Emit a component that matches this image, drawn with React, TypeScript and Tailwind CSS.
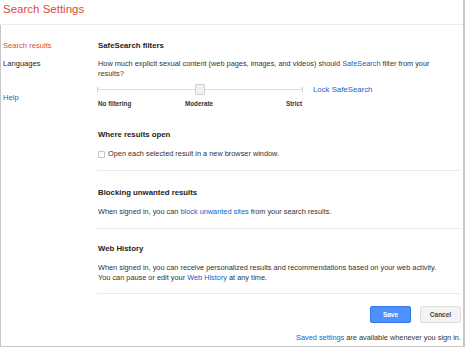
import React from "react";

const font = { fontFamily: '"Liberation Sans", Arial, sans-serif' };

function Separator() {
  return <div className="h-px bg-[#ebebeb] w-full" />;
}

export default function App() {
  return (
    <div
      className="w-[465px] h-[347px] bg-white flex flex-col border-r-2 border-b border-[#c6c6c6] overflow-hidden text-[#333]"
      style={font}
    >
      {/* header */}
      <div className="h-[25px] shrink-0 border-b border-[#ebebeb] pl-[3px] pt-[2px]">
        <div className="text-[#dd4b39] text-[11.5px] leading-[14px]">Search Settings</div>
      </div>

      <div className="flex-1 flex border-l border-[#c6c6c6]">
        {/* left nav */}
        <div className="w-[96px] shrink-0 pl-[2px] flex flex-col text-[7.6px] leading-[10px]">
          <div className="mt-[16px] text-[#dd4b39]">Search results</div>
          <div className="mt-[8px] text-[#222]">Languages</div>
          <div className="mt-[24px] text-[#1a5ccc]">Help</div>
        </div>

        {/* main */}
        <div className="flex-1 flex flex-col pr-[2px] text-[7.35px] leading-[10px]">
          <div className="mt-[16px] font-bold text-[#222] text-[7.8px] pl-[1px]">SafeSearch filters</div>
          <div className="mt-[8px] pl-[1px] pr-[20px]">
            How much explicit sexual content (web pages, images, and videos) should{" "}
            <span className="text-[#1a5ccc]">SafeSearch</span> filter from your results?
          </div>

          {/* slider */}
          <div className="mt-[5px] h-[11px] flex items-center">
            <div className="relative w-[206px] h-[11px]">
              <div className="absolute left-0 right-0 top-[5px] h-px bg-[#dcdcdc]" />
              <div className="absolute left-0 top-[3px] w-px h-[5px] bg-[#cfcfcf]" />
              <div className="absolute right-0 top-[3px] w-px h-[5px] bg-[#cfcfcf]" />
              <div className="absolute left-[98px] top-0 w-[10px] h-[11px] bg-[#f1f1f1] border border-[#d0d0d0] rounded-[1px]" />
            </div>
            <div className="ml-[10px] text-[#1a5ccc] text-[7.8px]">Lock SafeSearch</div>
          </div>
          <div className="mt-[4px] relative h-[10px] text-[6.3px] font-bold text-[#333]">
            <span className="absolute left-[1px] top-0">No filtering</span>
            <span className="absolute left-[88px] top-0">Moderate</span>
            <span className="absolute left-[189px] top-0">Strict</span>
          </div>

          <div className="mt-[21px] font-bold text-[#222] text-[7.8px] pl-[1px]">Where results open</div>
          <div className="mt-[9px] flex items-center pl-[1px]">
            <div className="w-[7px] h-[7px] border border-[#c6c6c6] rounded-[1px] bg-white" />
            <span className="ml-[3px]">Open each selected result in a new browser window.</span>
          </div>
          <div className="mt-[11px]">
            <Separator />
          </div>

          <div className="mt-[17px] font-bold text-[#222] text-[7.8px] pl-[1px]">Blocking unwanted results</div>
          <div className="mt-[9px] pl-[1px]">
            When signed in, you can <span className="text-[#1a5ccc]">block unwanted sites</span> from your search results.
          </div>
          <div className="mt-[11px]">
            <Separator />
          </div>

          <div className="mt-[15px] font-bold text-[#222] text-[7.8px] pl-[1px]">Web History</div>
          <div className="mt-[9px] pl-[1px] leading-[9.5px]">
            <div>When signed in, you can receive personalized results and recommendations based on your web activity.</div>
            <div>
              You can pause or edit your <span className="text-[#1a5ccc]">Web History</span> at any time.
            </div>
          </div>
          <div className="mt-[11px]">
            <Separator />
          </div>

          <div className="mt-[12px] flex justify-end gap-[9px]">
            <button className="w-[41px] h-[17px] rounded-[2px] bg-[#4d90fe] border border-[#3079ed] text-white font-bold text-[6.5px]">
              Save
            </button>
            <button className="w-[41px] h-[17px] rounded-[2px] bg-[#f3f3f3] border border-[#dcdcdc] text-[#444] font-bold text-[6.5px]">
              Cancel
            </button>
          </div>
          <div className="mt-[10px] text-right">
            <span className="text-[#1a5ccc]">Saved settings</span> are available whenever you sign in.
          </div>
        </div>
      </div>
    </div>
  );
}
